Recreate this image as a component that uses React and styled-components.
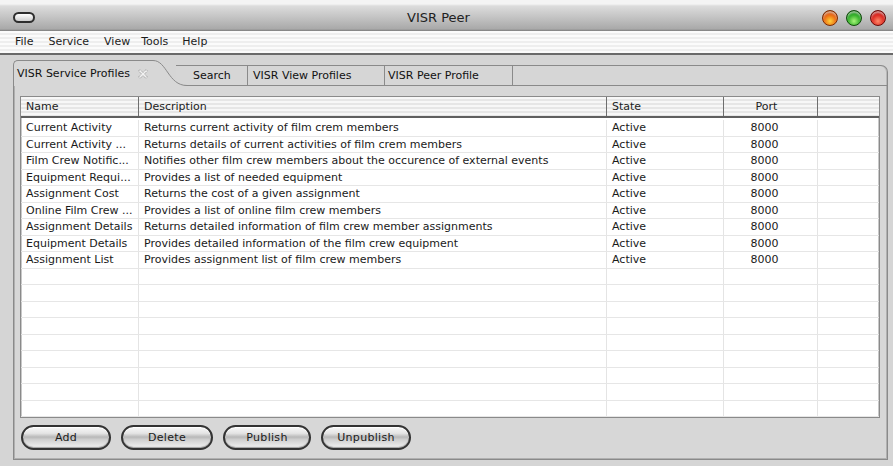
import React from "react";
import styled, { createGlobalStyle } from "styled-components";

const GlobalStyle = createGlobalStyle`
  html, body {
    margin: 0;
    padding: 0;
    background: #d5d5d5;
  }
  body {
    font-family: "DejaVu Sans", "Liberation Sans", sans-serif;
    font-size: 11px;
    color: #1a1a1a;
  }
  * { box-sizing: border-box; }
`;

const Window = styled.div`
  width: 893px;
  height: 466px;
  display: flex;
  flex-direction: column;
  background: #d5d5d5;
  overflow: hidden;
`;

const TitleBar = styled.div`
  flex: none;
  height: 31px;
  display: flex;
  align-items: center;
  padding: 4px 7px 0 13px;
  background: linear-gradient(#f4f4f4 0px, #f4f4f4 4px, #dcdcdc 6px, #c2c2c2 18px, #a9a9a9 29px, #7c7c7c 31px);
`;

const WindowMenuPill = styled.div`
  width: 22px;
  height: 11px;
  border: 2px solid #2e2e2e;
  border-radius: 6px;
  background: linear-gradient(#ffffff, #d0d0d0);
`;

const Title = styled.div`
  flex: 1;
  text-align: center;
  font-size: 13px;
  color: #222;
  padding-left: 20px;
`;

const Lights = styled.div`
  display: flex;
  gap: 8px;
  align-items: center;
`;

const Light = styled.div`
  width: 16px;
  height: 16px;
  border-radius: 50%;
  border: 1px solid ${(p) => p.$edge};
  background: radial-gradient(circle at 50% 72%, ${(p) => p.$glow} 0%, ${(p) => p.$base} 55%, ${(p) => p.$edge} 100%);
  box-shadow: inset 0 2px 2px rgba(255, 255, 255, 0.55);
`;

const MenuBar = styled.div`
  flex: none;
  height: 24px;
  display: flex;
  align-items: center;
  padding: 0 0 1px 15px;
  background: repeating-linear-gradient(#fbfbfb 0px, #fbfbfb 2px, #eeeeee 2px, #eeeeee 4px);
  border-bottom: 2px solid #6a6a6a;
`;

const MenuItem = styled.span`
  margin-right: ${(p) => p.$gap}px;
  color: #1c1c1c;
`;

const Body = styled.div`
  flex: 1;
  min-height: 0;
  display: flex;
  flex-direction: column;
  padding: 5px 5px 6px 13px;
`;

const TabStrip = styled.div`
  flex: none;
  height: 26px;
  display: flex;
  align-items: flex-end;
`;

const ActiveTab = styled.div`
  position: relative;
  z-index: 2;
  height: 26px;
  width: 140px;
  flex: none;
  display: flex;
  align-items: center;
  gap: 7px;
  padding: 0 0 0 3px;
  background: #d7d7d7;
  border-left: 1px solid #8a8a8a;
  border-top: 1px solid #8a8a8a;
  border-top-left-radius: 5px;
  color: #111;
  white-space: nowrap;
`;

const TabCurve = styled.svg`
  position: relative;
  z-index: 2;
  flex: none;
  width: 37px;
  height: 26px;
  margin-right: -14px;
  display: block;
`;

const Tab = styled.div`
  height: 21px;
  display: flex;
  align-items: center;
  padding: 0 0 0 ${(p) => p.$pl}px;
  width: ${(p) => p.$w}px;
  flex: none;
  background: #d6d6d6;
  border-top: 1px solid #8a8a8a;
  border-right: 1px solid #8a8a8a;
  border-bottom: 1px solid #8a8a8a;
  color: #111;
  white-space: nowrap;
`;

const TabFiller = styled.div`
  height: 21px;
  flex: 1;
  background: #d6d6d6;
  border-top: 1px solid #8a8a8a;
  border-right: 1px solid #8a8a8a;
  border-bottom: 1px solid #8a8a8a;
  border-top-right-radius: 7px;
  box-shadow: inset -1px 0 0 #b8b8b8;
`;

const Panel = styled.div`
  flex: 1;
  min-height: 0;
  display: flex;
  flex-direction: column;
  padding: 10px 7px 9px 6px;
  background: #d7d7d7;
  border: 1px solid #8a8a8a;
  border-top: none;
  box-shadow: inset -1px -1px 0 #b0b0b0, inset 1px 0 0 #b0b0b0;
`;

const Table = styled.div`
  flex: 1;
  min-height: 0;
  display: flex;
  flex-direction: column;
  background: #ffffff;
  border: 1px solid #8a8a8a;
  box-shadow: inset 0 0 0 1px #c8c8c8;
  overflow: hidden;
`;

const columns = "118px 468px 117px 94px 1fr";

const HeaderRow = styled.div`
  display: grid;
  grid-template-columns: ${columns};
  height: 21px;
  flex: none;
  background: repeating-linear-gradient(#f7f7f7 0px, #f7f7f7 2px, #e6e6e6 2px, #e6e6e6 4px);
  border-bottom: 2px solid #5f5f5f;
`;

const HeaderCell = styled.div`
  display: flex;
  align-items: center;
  justify-content: ${(p) => (p.$center ? "center" : "flex-start")};
  padding: ${(p) => (p.$center ? "0 8px 0 0" : "0 0 0 5px")};
  border-right: ${(p) => (p.$last ? "none" : "1px solid #6e6e6e")};
  color: #222;
`;

const Rows = styled.div`
  flex: 1;
  min-height: 0;
  overflow: hidden;
  padding-top: 2px;
`;

const Row = styled.div`
  display: grid;
  grid-template-columns: ${columns};
  height: 16.5px;
  border-bottom: 1px solid #e6e6e6;
`;

const Cell = styled.div`
  display: flex;
  align-items: center;
  justify-content: ${(p) => (p.$center ? "center" : "flex-start")};
  padding: ${(p) => (p.$center ? "0 12px 0 0" : "0 0 0 5px")};
  border-right: ${(p) => (p.$last ? "none" : "1px solid #e4e4e4")};
  white-space: nowrap;
  overflow: hidden;
  color: #1a1a1a;
`;

const ButtonRow = styled.div`
  display: flex;
  gap: 10px;
  padding: 7px 0 0 1px;
  flex: none;
`;

const PillButton = styled.button`
  width: ${(p) => p.$w}px;
  height: 25px;
  border: 2px solid #333333;
  border-radius: 13px;
  font-family: "DejaVu Sans", "Liberation Sans", sans-serif;
  font-size: 11px;
  color: #1a1a1a;
  letter-spacing: 0.3px;
  padding: 0;
  background: linear-gradient(#f8f8f8 0%, #e4e4e4 30%, #b8b8b8 48%, #cfcfcf 60%, #f2f2f2 100%);
  box-shadow: inset 0 1px 0 #ffffff, inset 0 -1px 1px #a0a0a0;
`;

const CloseIcon = () => (
  <svg width="12" height="12" viewBox="0 0 12 12">
    <path
      d="M1.5 3 L3 1.5 L6 4.5 L9 1.5 L10.5 3 L7.5 6 L10.5 9 L9 10.5 L6 7.5 L3 10.5 L1.5 9 L4.5 6 Z"
      fill="#f2f2f2"
      stroke="#9a9a9a"
      strokeWidth="1"
      strokeDasharray="1.2 0.8"
    />
  </svg>
);

const services = [
  ["Current Activity", "Returns current activity of film crem members"],
  ["Current Activity ...", "Returns details of current activities of film crem members"],
  ["Film Crew Notific...", "Notifies other film crew members about the occurence of external events"],
  ["Equipment Requi...", "Provides a list of needed equipment"],
  ["Assignment Cost", "Returns the cost of a given assignment"],
  ["Online Film Crew ...", "Provides a list of online film crew members"],
  ["Assignment Details", "Returns detailed information of film crew member assignments"],
  ["Equipment Details", "Provides detailed information of the film crew equipment"],
  ["Assignment List", "Provides assignment list of film crew members"],
];

const emptyRows = 11;

export default function App() {
  return (
    <>
      <GlobalStyle />
      <Window>
        <TitleBar>
          <WindowMenuPill />
          <Title>VISR Peer</Title>
          <Lights>
            <Light $base="#e8610f" $glow="#ffd23a" $edge="#7a2a00" />
            <Light $base="#27a821" $glow="#a8f57a" $edge="#0f4a0a" />
            <Light $base="#d8201a" $glow="#ff8a6a" $edge="#6a0a06" />
          </Lights>
        </TitleBar>
        <MenuBar>
          <MenuItem $gap={15}>File</MenuItem>
          <MenuItem $gap={15}>Service</MenuItem>
          <MenuItem $gap={11}>View</MenuItem>
          <MenuItem $gap={14}>Tools</MenuItem>
          <MenuItem $gap={0}>Help</MenuItem>
        </MenuBar>
        <Body>
          <TabStrip>
            <ActiveTab>
              <span>VISR Service Profiles</span>
              <CloseIcon />
            </ActiveTab>
            <TabCurve viewBox="0 0 37 26" preserveAspectRatio="none">
              <path d="M0 0.5 C14 0.5 15 25.5 34 25.5 L37 25.5 L37 26 L0 26 Z" fill="#d7d7d7" />
              <path d="M0 0.5 C14 0.5 15 25.5 34 25.5 L37 25.5" fill="none" stroke="#8a8a8a" strokeWidth="1" />
            </TabCurve>
            <Tab $w={72} $pl={17}>Search</Tab>
            <Tab $w={137} $pl={5}>VISR View Profiles</Tab>
            <Tab $w={128} $pl={3}>VISR Peer Profile</Tab>
            <TabFiller />
          </TabStrip>
          <Panel>
            <Table>
              <HeaderRow>
                <HeaderCell>Name</HeaderCell>
                <HeaderCell>Description</HeaderCell>
                <HeaderCell>State</HeaderCell>
                <HeaderCell $center>Port</HeaderCell>
                <HeaderCell $last />
              </HeaderRow>
              <Rows>
                {services.map(([name, desc]) => (
                  <Row key={name + desc}>
                    <Cell>{name}</Cell>
                    <Cell>{desc}</Cell>
                    <Cell>Active</Cell>
                    <Cell $center>8000</Cell>
                    <Cell $last />
                  </Row>
                ))}
                {Array.from({ length: emptyRows }, (_, i) => (
                  <Row key={"empty" + i}>
                    <Cell />
                    <Cell />
                    <Cell />
                    <Cell $center />
                    <Cell $last />
                  </Row>
                ))}
              </Rows>
            </Table>
            <ButtonRow>
              <PillButton $w={90}>Add</PillButton>
              <PillButton $w={92}>Delete</PillButton>
              <PillButton $w={88}>Publish</PillButton>
              <PillButton $w={90}>Unpublish</PillButton>
            </ButtonRow>
          </Panel>
        </Body>
      </Window>
    </>
  );
}
